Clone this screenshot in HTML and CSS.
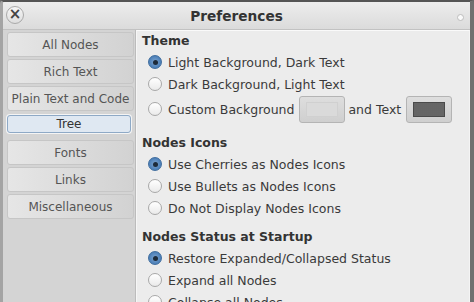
FILE: index.html
```html
<!DOCTYPE html>
<html lang="en">
<head>
    <meta charset="UTF-8">
    <title>Preferences</title>
    <link rel="stylesheet" href="styles.css">
</head>
<body>
    <div class="window">
        <div class="titlebar">
            <span class="close-btn">&#215;</span>
            <h1>Preferences</h1>
            <span class="max-dot"></span>
        </div>

        <div class="dialog-body">
            <div class="sidebar">
                <div class="side-item">All Nodes</div>
                <div class="side-item">Rich Text</div>
                <div class="side-item">Plain Text and Code</div>
                <div class="side-item active">Tree</div>
                <div class="side-item">Fonts</div>
                <div class="side-item">Links</div>
                <div class="side-item">Miscellaneous</div>
            </div>

            <div class="content">
                <div class="section">
                    <h2>Theme</h2>
                    <label class="radio-row"><span class="radio checked"></span>Light Background, Dark Text</label>
                    <label class="radio-row"><span class="radio"></span>Dark Background, Light Text</label>
                    <label class="radio-row tall">
                        <span class="radio"></span>Custom Background
                        <span class="color-btn"><span class="swatch light"></span></span>
                        and Text
                        <span class="color-btn"><span class="swatch dark"></span></span>
                    </label>
                </div>

                <div class="section tight">
                    <h2>Nodes Icons</h2>
                    <label class="radio-row"><span class="radio checked"></span>Use Cherries as Nodes Icons</label>
                    <label class="radio-row"><span class="radio"></span>Use Bullets as Nodes Icons</label>
                    <label class="radio-row"><span class="radio"></span>Do Not Display Nodes Icons</label>
                </div>

                <div class="section">
                    <h2>Nodes Status at Startup</h2>
                    <label class="radio-row"><span class="radio checked"></span>Restore Expanded/Collapsed Status</label>
                    <label class="radio-row"><span class="radio"></span>Expand all Nodes</label>
                    <label class="radio-row"><span class="radio"></span>Collapse all Nodes</label>
                </div>
            </div>
        </div>
    </div>
</body>
</html>
```

FILE: styles.css
```css
:root {
    --text-color: #3a3a3a;
    --side-text: #555555;
    --content-bg: #ececec;
    --side-bg: #d4d4d4;
}

* {
    box-sizing: border-box;
}

body {
    margin: 0;
    padding: 0;
    font-family: 'DejaVu Sans', 'Noto Sans', sans-serif;
    font-size: 12px;
    color: var(--text-color);
    background-color: #6a6a6a;
    overflow: hidden;
}

.window {
    width: 474px;
    height: 302px;
    display: flex;
    flex-direction: column;
    border-top: 2px solid #555;
    border-left: 3px solid #a4a4a4;
    border-right: 4px solid #707070;
    border-radius: 4px 4px 0 0;
    background-color: var(--content-bg);
    overflow: hidden;
}

/* Barre de titre */
.titlebar {
    height: 28px;
    flex-shrink: 0;
    display: flex;
    align-items: center;
    justify-content: center;
    position: relative;
    background: linear-gradient(#ededed, #dbdbdb);
    border-bottom: 1px solid #c2c2c2;
}

.titlebar h1 {
    margin: 0;
    font-size: 13.7px;
    font-weight: bold;
    color: #333;
}

.close-btn {
    position: absolute;
    left: 3px;
    top: 4px;
    width: 18px;
    height: 18px;
    border-radius: 50%;
    border: 1px solid #a9a9a9;
    background: linear-gradient(#f6f6f6, #dedede);
    color: #444;
    font-size: 15px;
    line-height: 15px;
    text-align: center;
    font-weight: bold;
}

.max-dot {
    position: absolute;
    right: 6px;
    top: 12px;
    width: 7px;
    height: 7px;
    border-radius: 50%;
    background-color: #fafafa;
    border: 1px solid #bdbdbd;
}

.dialog-body {
    flex: 1;
    display: flex;
    min-height: 0;
}

/* Menu latéral */
.sidebar {
    width: 133px;
    flex-shrink: 0;
    background-color: var(--side-bg);
    padding: 2px 1px 0 4px;
    border-right: 1px solid #bcbcbc;
    display: flex;
    flex-direction: column;
    gap: 2px;
}

.side-item {
    height: 25px;
    display: flex;
    align-items: center;
    justify-content: center;
    color: var(--side-text);
    border: 1px solid #c6c6c6;
    border-radius: 3px;
    background: linear-gradient(to right, #e6e6e6, #d2d2d2);
    white-space: nowrap;
}

.side-item.active {
    height: 18px;
    margin: 2px 3px 5px 0;
    background: #dfe8f2;
    border-color: #8ea9c6;
    box-shadow: 0 0 0 1px #f4f4f4;
    color: #333;
}

/* Zone de contenu */
.content {
    flex: 1;
    padding: 2px 0 0 5px;
    font-size: 12.5px;
    border-top: 1px solid #fafafa;
    border-left: 1px solid #f6f6f6;
    border-right: 1px solid #f4f4f4;
}

.section {
    margin-bottom: 12px;
}

.section.tight {
    margin-bottom: 10px;
}

.section h2 {
    margin: 0 0 3px 0;
    font-size: 12.5px;
    font-weight: bold;
    line-height: 15px;
    color: #333;
}

.radio-row {
    height: 22px;
    display: flex;
    align-items: center;
    padding-left: 6px;
    white-space: nowrap;
}

.radio-row.tall {
    height: 28px;
}

.radio {
    width: 14px;
    height: 14px;
    border-radius: 50%;
    border: 1px solid #a8a8a8;
    background: linear-gradient(#ffffff, #eaeaea);
    margin-right: 6px;
    flex-shrink: 0;
    display: flex;
    align-items: center;
    justify-content: center;
}

.radio.checked {
    border-color: #3f6d9e;
    background: radial-gradient(circle, #7fa6d0 0%, #4b7fb8 70%, #3c6ea6 100%);
}

.radio.checked::after {
    content: '';
    width: 5px;
    height: 5px;
    border-radius: 50%;
    background-color: #1d2b3a;
}

.color-btn {
    width: 46px;
    height: 27px;
    margin: 0 3px 0 5px;
    border: 1px solid #b4b4b4;
    border-radius: 3px;
    background: linear-gradient(#dedede, #cfcfcf);
    display: flex;
    align-items: center;
    justify-content: center;
}

.swatch {
    width: 32px;
    height: 15px;
}

.swatch.light {
    background-color: #dadada;
    border: 1px solid #d0d0d0;
}

.swatch.dark {
    background-color: #555;
    background-image: radial-gradient(#777 0.6px, transparent 0.8px);
    background-size: 2px 2px;
    border: 1px solid #4a4a4a;
}
```
